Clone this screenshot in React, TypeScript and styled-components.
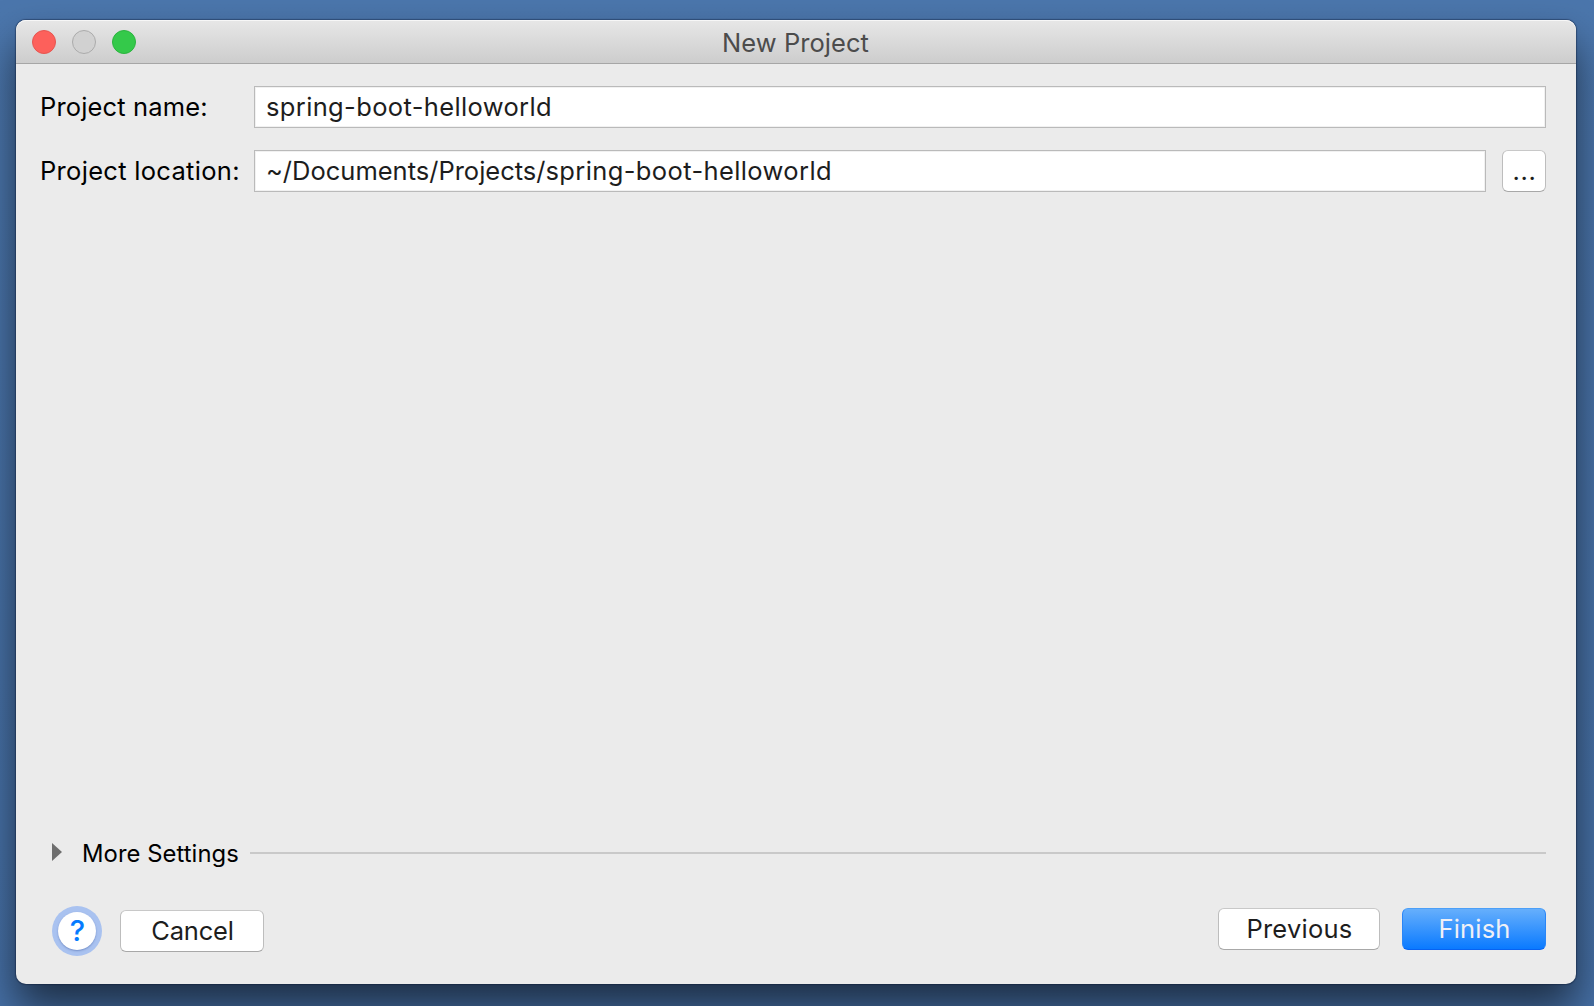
import React from "react";
import styled, { createGlobalStyle } from "styled-components";

const GlobalStyle = createGlobalStyle`
  * { box-sizing: border-box; }
  body {
    margin: 0;
    background: #4874a9;
    font-family: "Inter", "Liberation Sans", sans-serif;
    font-size: 25.5px;
    overflow: hidden;
  }
`;

const Desktop = styled.div`
  display: flex;
  width: 1594px;
  height: 1006px;
  padding: 20px 18px 22px 16px;
  overflow: hidden;
  background: linear-gradient(#4b76ac, #4670a6);
`;

const Window = styled.div`
  display: flex;
  flex-direction: column;
  flex: 1;
  border-radius: 10px;
  background: #ebebeb;
  box-shadow: 0 0 1px 1px rgba(10, 22, 50, 0.4), 0 24px 42px 0 rgba(0, 0, 0, 0.58);
`;

const TitleBar = styled.header`
  display: grid;
  grid-template-columns: 1fr auto 1fr;
  align-items: center;
  height: 44px;
  padding: 0 17px 1px 16px;
  border-radius: 10px 10px 0 0;
  border-bottom: 1px solid #a6a6a6;
  background: linear-gradient(#e7e7e7, #cdcdcd);
  box-shadow: inset 0 1px 0 #f7f7f7;
`;

const Lights = styled.div`
  display: flex;
  gap: 16px;
  padding-top: 1px;
`;

const Light = styled.span<{ $fill: string; $edge: string }>`
  width: 24px;
  height: 24px;
  border-radius: 50%;
  border: 1px solid ${(p) => p.$edge};
  background: ${(p) => p.$fill};
`;

const Title = styled.h1`
  margin: 0;
  padding-top: 3px;
  font-size: 25.5px;
  font-weight: 400;
  line-height: 39px;
  letter-spacing: 0.05px;
  color: #4c4c4c;
`;

const Content = styled.main`
  display: flex;
  flex-direction: column;
  flex: 1;
  padding: 22px 30px 28px 24px;
`;

const Field = styled.div`
  display: flex;
  align-items: center;
  height: 42px;
  margin-bottom: 22px;
`;

const Label = styled.label<{ $track: number }>`
  width: 214px;
  line-height: 42px;
  white-space: nowrap;
  letter-spacing: ${(p) => p.$track}px;
  color: #000;
`;

const TextBox = styled.div`
  flex: 1;
  height: 42px;
  padding-left: 11px;
  line-height: 40px;
  border: 1px solid #bababa;
  background: #fff;
  box-shadow: inset 0 0 0 1px #f1f1f1;
  white-space: nowrap;
  color: #1d1d1d;
`;

const Run = styled.span<{ $track: number }>`
  letter-spacing: ${(p) => p.$track}px;
`;

const Button = styled.button<{ $width: number; $track?: number; $primary?: boolean }>`
  width: ${(p) => p.$width}px;
  height: 42px;
  padding: 0 0 0 1px;
  border: 1px solid;
  border-color: ${(p) => (p.$primary ? "#4b9ff8 #2a86f7 #0763f2" : "#c8c8c8 #bdbdbd #a8a8a8")};
  border-radius: 6px;
  background: ${(p) => (p.$primary ? "linear-gradient(#66affc, #0a7aff)" : "#fff")};
  font: inherit;
  line-height: 40px;
  letter-spacing: ${(p) => p.$track ?? 0}px;
  color: ${(p) => (p.$primary ? "#f0f0f6" : "#1d1d1d")};
`;

const BrowseButton = styled(Button)`
  margin-left: 16px;
`;

const MoreSettings = styled.div`
  display: flex;
  align-items: center;
  height: 30px;
  margin-top: auto;
  padding-left: 12px;
`;

const Arrow = styled.svg`
  display: block;
  width: 10px;
  height: 18px;
  margin-bottom: 2px;
`;

const MoreLabel = styled.span`
  width: 168px;
  margin: 1px 0 0 20px;
  font-size: 23.8px;
  line-height: 30px;
  letter-spacing: 0.06px;
  color: #000;
`;

const Divider = styled.hr`
  flex: 1;
  height: 2px;
  margin: 0;
  border: 0;
  background: #c9c9c9;
`;

const Footer = styled.footer`
  display: flex;
  align-items: center;
  height: 50px;
  margin-top: 38px;
  padding-left: 12px;
`;

const HelpRing = styled.div`
  display: flex;
  width: 50px;
  height: 50px;
  margin-right: 18px;
  padding: 6px;
  border-radius: 50%;
  background: #a9c2f0;
`;

const HelpButton = styled.button`
  width: 38px;
  height: 38px;
  padding: 0 0 0 1px;
  border: 0;
  border-radius: 50%;
  background: #fff;
  box-shadow: 0 1px 2px rgba(50, 80, 150, 0.45);
  color: #067bff;
  font: 450 29px/38px "Inter", sans-serif;
`;

const Actions = styled.div`
  display: flex;
  gap: 22px;
  margin-left: auto;
  padding-bottom: 4px;
`;

export default function App() {
  return (
    <>
      <GlobalStyle />
      <Desktop>
        <Window>
          <TitleBar>
            <Lights>
              <Light $fill="#fd605b" $edge="#e65550" />
              <Light $fill="#d1d1d1" $edge="#ababab" />
              <Light $fill="#34c94a" $edge="#2bb43f" />
            </Lights>
            <Title>New Project</Title>
          </TitleBar>
          <Content>
            <Field>
              <Label $track={0.14}>Project name:</Label>
              <TextBox>
                <Run $track={0.36}>spring-boot-helloworld</Run>
              </TextBox>
            </Field>
            <Field>
              <Label $track={0.3}>Project location:</Label>
              <TextBox>
                <Run $track={0}>~/Documents/Projects/</Run>
                <Run $track={0.38}>spring-boot-helloworld</Run>
              </TextBox>
              <BrowseButton $width={44} $track={0.7}>...</BrowseButton>
            </Field>
            <MoreSettings>
              <Arrow viewBox="0 0 10 18">
                <path d="M0 0L10 9L0 18Z" fill="#6e6e6e" />
              </Arrow>
              <MoreLabel>More Settings</MoreLabel>
              <Divider />
            </MoreSettings>
            <Footer>
              <HelpRing>
                <HelpButton>?</HelpButton>
              </HelpRing>
              <Button $width={144} $track={-0.2}>Cancel</Button>
              <Actions>
                <Button $width={162} $track={0.25}>Previous</Button>
                <Button $width={144} $track={0.2} $primary>Finish</Button>
              </Actions>
            </Footer>
          </Content>
        </Window>
      </Desktop>
    </>
  );
}
